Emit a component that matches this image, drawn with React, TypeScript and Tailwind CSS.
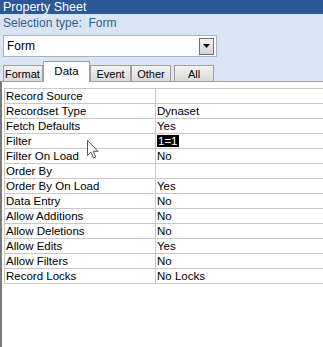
import React from 'react';

const rows: [string, string][] = [
  ['Record Source', ''],
  ['Recordset Type', 'Dynaset'],
  ['Fetch Defaults', 'Yes'],
  ['Filter', '1=1'],
  ['Filter On Load', 'No'],
  ['Order By', ''],
  ['Order By On Load', 'Yes'],
  ['Data Entry', 'No'],
  ['Allow Additions', 'No'],
  ['Allow Deletions', 'No'],
  ['Allow Edits', 'Yes'],
  ['Allow Filters', 'No'],
  ['Record Locks', 'No Locks'],
];

const tabs = [
  { label: 'Format', w: 'w-[40px]', ml: 'ml-[3px]', align: 'justify-start pl-[1px]' },
  { label: 'Data', w: 'w-[47px]', ml: 'ml-0', align: 'justify-center', active: true },
  { label: 'Event', w: 'w-[41px]', ml: 'ml-0', align: 'justify-center' },
  { label: 'Other', w: 'w-[40px]', ml: 'ml-0', align: 'justify-center' },
  { label: 'All', w: 'w-[40px]', ml: 'ml-[3px]', align: 'justify-center' },
];

export default function App() {
  return (
    <div className="relative w-[323px] h-[347px] overflow-hidden bg-[#d9e5f4] flex flex-col font-['Liberation_Sans','Arial',sans-serif] text-[12px]">
      {/* title */}
      <div className="h-[14px] bg-[#2b5797] text-white leading-[14px] pl-[3px] text-[12.5px]">Property Sheet</div>

      <div className="h-[21px] pl-[3px] pt-[2px] leading-[15px] text-[#2f5c9c] whitespace-pre">Selection type:  Form</div>

      {/* dropdown */}
      <div className="ml-[3px] w-[214px] h-[22px] bg-white border border-[#a9b3c0] flex items-center justify-between pl-[3px] pr-[2px]">
        <span className="leading-[15px]">Form</span>
        <div className="w-[15px] h-[17px] border border-[#6f6f6f] bg-gradient-to-b from-[#f2f2f2] to-[#d4d4d4] flex items-center justify-center">
          <svg width="7" height="4" viewBox="0 0 7 4"><path d="M0 0 L7 0 L3.5 4 Z" fill="#000" /></svg>
        </div>
      </div>

      {/* tabs */}
      <div className="h-[24px] flex items-end text-[11px] whitespace-nowrap">
        {tabs.map((t) =>
          t.active ? (
            <div key={t.label} className={`${t.w} ${t.ml} h-[21px] mb-[-1px] relative z-10 bg-white border border-b-0 border-[#a0a0a0] flex items-start ${t.align} pt-[2px] leading-[15px] text-[11.5px]`}>
              {t.label}
            </div>
          ) : (
            <div key={t.label} className={`${t.w} ${t.ml} shrink-0 h-[16px] border border-b-0 border-[#a0a0a0] bg-gradient-to-b from-[#f4f4f4] to-[#d9d9d9] flex items-center ${t.align} leading-[14px]`}>
              {t.label}
            </div>
          )
        )}
      </div>

      {/* panel */}
      <div className="flex-1 bg-white border-t border-[#a0a0a0] border-l-2 border-l-[#7a7a7a] pt-[6px] pl-[2px]">
        <div className="border-t border-l border-[#c8c8c8] text-[11.5px]">
          {rows.map(([k, v]) => (
            <div key={k} className="flex h-[15px] border-b border-[#c8c8c8]">
              <div className="w-[151px] shrink-0 border-r border-[#c8c8c8] pl-[1px] leading-[14px] text-black">{k}</div>
              <div className="flex-1 pl-[1px] leading-[14px] text-black">
                {v === '1=1' ? <span className="bg-black text-white px-[1px]">{v}</span> : v}
              </div>
            </div>
          ))}
        </div>
      </div>

      {/* mouse cursor */}
      <svg className="absolute left-[87px] top-[140px]" width="13" height="20" viewBox="0 0 13 20">
        <path d="M0.5 0.5 L0.5 15.5 L4 12.2 L6.5 18 L8.7 17 L6.3 11.3 L11 11.3 Z" fill="#fff" stroke="#555" strokeWidth="1" strokeLinejoin="round" />
      </svg>
    </div>
  );
}
